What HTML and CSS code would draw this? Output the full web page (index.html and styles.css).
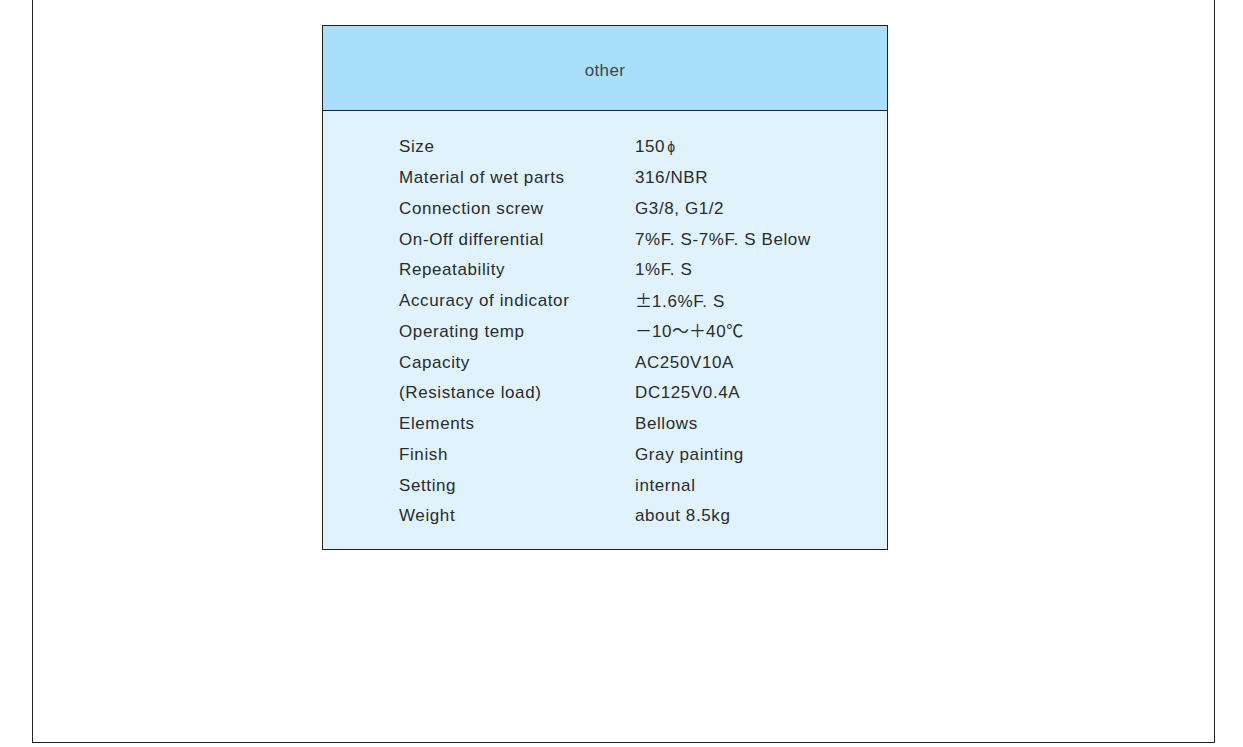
FILE: index.html
```html
<!DOCTYPE html>
<html>
<head>
<meta charset="utf-8">
<link rel="stylesheet" href="styles.css">
</head>
<body>
<div class="frame">
  <div class="spec">
    <div class="spec-head">other</div>
    <div class="spec-body">
      <div class="row"><span class="k">Size</span><span class="v">150<span class="phi">ϕ</span></span></div>
      <div class="row"><span class="k">Material of wet parts</span><span class="v">316/NBR</span></div>
      <div class="row"><span class="k">Connection screw</span><span class="v">G3/8, G1/2</span></div>
      <div class="row"><span class="k">On-Off differential</span><span class="v">7%F. S-7%F. S Below</span></div>
      <div class="row"><span class="k">Repeatability</span><span class="v">1%F. S</span></div>
      <div class="row"><span class="k">Accuracy of indicator</span><span class="v"><span class="cjk">±</span>1.6%F. S</span></div>
      <div class="row"><span class="k">Operating temp</span><span class="v"><span class="cjk">－</span>10<span class="cjk">～＋</span>40<span class="cjk">℃</span></span></div>
      <div class="row"><span class="k">Capacity</span><span class="v">AC250V10A</span></div>
      <div class="row"><span class="k">(Resistance load)</span><span class="v">DC125V0.4A</span></div>
      <div class="row"><span class="k">Elements</span><span class="v">Bellows</span></div>
      <div class="row"><span class="k">Finish</span><span class="v">Gray painting</span></div>
      <div class="row"><span class="k">Setting</span><span class="v">internal</span></div>
      <div class="row"><span class="k">Weight</span><span class="v">about 8.5kg</span></div>
    </div>
  </div>
</div>
</body>
</html>
```
FILE: styles.css
```css
html, body {
  margin: 0;
  padding: 0;
  background: #fff;
}
body {
  font-family: "Liberation Sans", "Noto Sans CJK JP", sans-serif;
  color: #2b2b2b;
}
.frame {
  box-sizing: border-box;
  margin-left: 32px;
  width: 1183px;
  height: 743px;
  border-left: 1px solid #222;
  border-right: 1px solid #222;
  border-bottom: 1px solid #222;
  padding-top: 25px;
}
.spec {
  box-sizing: border-box;
  width: 566px;
  margin-left: 289px;
  border: 1px solid #222;
}
.spec-head {
  box-sizing: border-box;
  height: 85px;
  padding-top: 6px;
  background: #a9dffa;
  border-bottom: 1px solid #222;
  display: flex;
  align-items: center;
  justify-content: center;
  font-size: 17px;
  letter-spacing: 0.4px;
  color: #3a4650;
}
.spec-body {
  background: #e0f3fc;
  padding: 21px 0 17px 76px;
}
.row {
  display: flex;
  height: 30.75px;
  align-items: center;
  font-size: 17px;
  line-height: 20px;
  letter-spacing: 0.6px;
}
.k {
  width: 236px;
  flex: none;
}
.v {
  flex: none;
}
.cjk {
  font-family: "Noto Sans CJK JP", sans-serif;
  letter-spacing: 0;
  line-height: 1;
}
.phi {
  font-size: 14px;
  margin-left: 2px;
}
```
